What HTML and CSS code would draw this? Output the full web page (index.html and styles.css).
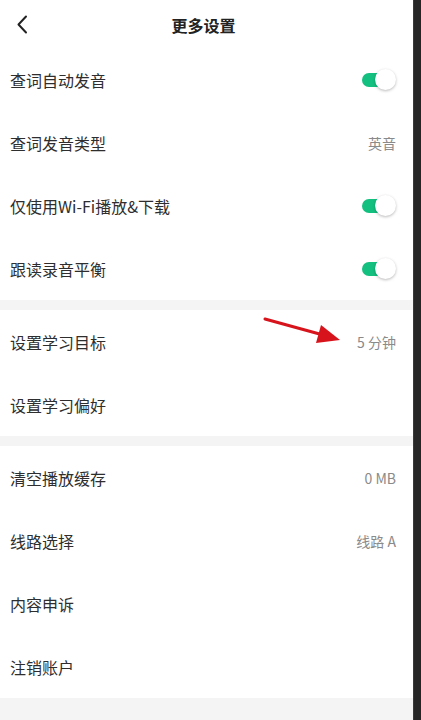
FILE: index.html
```html
<!DOCTYPE html>
<html lang="zh-CN">
<head>
<meta charset="utf-8">
<title>更多设置</title>
<link rel="stylesheet" href="styles.css">
</head>
<body>
<div class="screen">
  <div class="page">
    <header class="topbar">
      <svg class="back" width="12" height="19" viewBox="0 0 12 19"><path d="M10 1.5 L2.5 9.5 L10 17.5" fill="none" stroke="#222" stroke-width="2" stroke-linecap="round" stroke-linejoin="round"/></svg>
      <h1 class="title">更多设置</h1>
    </header>

    <section class="group">
      <div class="row"><span class="label">查词自动发音</span><span class="toggle"><span class="track"></span><span class="knob"></span></span></div>
      <div class="row"><span class="label">查词发音类型</span><span class="value">英音</span></div>
      <div class="row"><span class="label">仅使用Wi-Fi播放&amp;下载</span><span class="toggle"><span class="track"></span><span class="knob"></span></span></div>
      <div class="row"><span class="label">跟读录音平衡</span><span class="toggle"><span class="track"></span><span class="knob"></span></span></div>
    </section>
    <div class="band"></div>
    <section class="group">
      <div class="row"><span class="label">设置学习目标</span><span class="value">5 分钟</span></div>
      <div class="row"><span class="label">设置学习偏好</span></div>
    </section>
    <div class="band"></div>
    <section class="group">
      <div class="row"><span class="label">清空播放缓存</span><span class="value">0 MB</span></div>
      <div class="row"><span class="label">线路选择</span><span class="value">线路 A</span></div>
      <div class="row"><span class="label">内容申诉</span></div>
      <div class="row"><span class="label">注销账户</span></div>
    </section>
    <div class="footer-band"></div>

    <svg class="annot-arrow" width="80" height="30" viewBox="0 0 80 30">
      <path d="M2 3 L62 19.5" stroke="#d7141c" stroke-width="3" stroke-linecap="round"/>
      <path d="M58 9 L77 24 L53 27 Z" fill="#d7141c"/>
    </svg>
  </div>
  <div class="edge"></div>
</div>
</body>
</html>
```

FILE: styles.css
```css
* { box-sizing: border-box; }
html, body { margin: 0; padding: 0; }
body {
  width: 421px;
  height: 720px;
  overflow: hidden;
  font-family: "Noto Sans CJK SC", "Noto Sans", sans-serif;
  color: #2c2c2c;
  background: #ffffff;
}
.screen {
  display: flex;
  height: 720px;
}
.page {
  position: relative;
  flex: 1;
  display: flex;
  flex-direction: column;
  background: #ffffff;
}
.edge {
  width: 8px;
  background: #262626;
  border-left: 1px solid #3a3a3a;
}
.topbar {
  position: relative;
  height: 48px;
  padding-top: 1px;
  display: flex;
  align-items: center;
  justify-content: center;
}
.back {
  position: absolute;
  left: 16px;
  top: 15px;
}
.title {
  margin: 0 6px 0 0;
  font-size: 16px;
  font-weight: 700;
  color: #222;
  letter-spacing: 0;
}
.group {
  display: flex;
  flex-direction: column;
}
.row {
  height: 63px;
  display: flex;
  align-items: center;
  justify-content: space-between;
  padding: 0 17px 0 10px;
}
.label {
  font-size: 16px;
  color: #2e2e2e;
}
.value {
  font-size: 14px;
  color: #8a8a8a;
}
.toggle {
  position: relative;
  width: 34px;
  height: 22px;
  display: block;
}
.track {
  position: absolute;
  left: 0;
  top: 4px;
  width: 30px;
  height: 14px;
  border-radius: 7px;
  background: #13c07f;
}
.knob {
  position: absolute;
  right: 0;
  top: 0;
  width: 21px;
  height: 21px;
  border-radius: 50%;
  background: #ffffff;
  box-shadow: 0 1px 3px rgba(0,0,0,0.28);
}
.band {
  height: 10px;
  background: #f4f4f4;
}
.footer-band {
  flex: 1;
  background: #f4f4f4;
}
.annot-arrow {
  position: absolute;
  left: 263px;
  top: 316px;
}
```
